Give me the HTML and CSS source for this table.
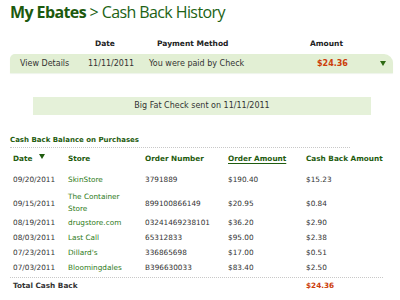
FILE: index.html
```html
<!DOCTYPE html>
<html>
<head>
<meta charset="utf-8">
<link rel="stylesheet" href="styles.css">
</head>
<body>
<div class="page">
  <h1 class="title"><b>My Ebates</b> &gt; Cash Back History</h1>

  <div class="pay-head">
    <span class="c-view"></span>
    <span class="c-date">Date</span>
    <span class="c-method">Payment Method</span>
    <span class="c-amt">Amount</span>
  </div>
  <div class="pay-row">
    <span class="c-view">View Details</span>
    <span class="c-date">11/11/2011</span>
    <span class="c-method">You were paid by Check</span>
    <span class="c-amt red">$24.36</span>
    <span class="c-arrow"><svg width="6" height="5" viewBox="0 0 6 5"><path d="M0 0H6L3 5Z" fill="#2f6b14"/></svg></span>
  </div>

  <div class="notice">Big Fat Check sent on 11/11/2011</div>

  <div class="section-title">Cash Back Balance on Purchases</div>

  <div class="grid">
    <div class="hd row-h">Date <svg class="sort" width="6" height="5" viewBox="0 0 6 5"><path d="M0 0H6L3 5Z" fill="#1f5c0f"/></svg></div>
    <div class="hd row-h">Store</div>
    <div class="hd row-h">Order Number</div>
    <div class="hd row-h"><u>Order Amount</u></div>
    <div class="hd row-h">Cash Back Amount</div>

    <div class="r1">09/20/2011</div><div class="r1 store">SkinStore</div><div class="r1">3791889</div><div class="r1">$190.40</div><div class="r1">$15.23</div>
    <div class="r2">09/15/2011</div><div class="r2 store two">The Container<br>Store</div><div class="r2">899100866149</div><div class="r2">$20.95</div><div class="r2">$0.84</div>
    <div class="rn">08/19/2011</div><div class="rn store">drugstore.com</div><div class="rn">03241469238101</div><div class="rn">$36.20</div><div class="rn">$2.90</div>
    <div class="rn">08/03/2011</div><div class="rn store">Last Call</div><div class="rn">65312833</div><div class="rn">$95.00</div><div class="rn">$2.38</div>
    <div class="rn">07/23/2011</div><div class="rn store">Dillard's</div><div class="rn">336865698</div><div class="rn">$17.00</div><div class="rn">$0.51</div>
    <div class="rn">07/03/2011</div><div class="rn store">Bloomingdales</div><div class="rn">B396630033</div><div class="rn">$83.40</div><div class="rn">$2.50</div>
  </div>

  <div class="total">
    <span class="total-label">Total Cash Back</span>
    <span class="total-amt red">$24.36</span>
  </div>
</div>
</body>
</html>
```

FILE: styles.css
```css
html, body {
  margin: 0;
  padding: 0;
  background: #ffffff;
}
body {
  font-family: "DejaVu Sans", Verdana, sans-serif;
  color: #333333;
  width: 400px;
  height: 300px;
  overflow: hidden;
}
.page {
  padding: 0 7px 0 10px;
}
.title {
  margin: 0;
  padding-top: 1px;
  height: 32px;
  font-family: "Open Sans", "DejaVu Sans", sans-serif;
  font-weight: normal;
  font-size: 16px;
  line-height: 22px;
  color: #216214;
  letter-spacing: -0.6px;
}
.title b {
  font-weight: bold;
  color: #1c5a0e;
}
.pay-head, .pay-row {
  display: flex;
  align-items: center;
}
.pay-head {
  height: 21px;
  font-size: 7.5px;
  font-weight: bold;
  color: #222;
}
.pay-head .c-date { padding-left: 7px; width: 62px; }
.pay-head .c-method { width: 153px; }
.pay-head .c-amt { width: 62px; }
.pay-row {
  height: 19px;
  background: #e2efd4;
  border-radius: 5px 9px 0 0;
  font-size: 8px;
  color: #333;
  box-shadow: 0 1px 1px #eef4ea;
}
.c-view { width: 68px; padding-left: 10px; flex: none; }
.c-date { width: 61px; flex: none; }
.c-method { width: 161px; flex: none; }
.c-amt { width: 62px; flex: none; }
.pay-row .c-amt { padding-left: 7px; width: 55px; }
.c-arrow { padding-left: 8px; display: flex; }
.red {
  color: #cc3d0a;
  font-weight: bold;
}
.notice {
  margin: 24px 22px 0 23px;
  height: 18px;
  line-height: 18px;
  background: #e5f1d9;
  text-align: center;
  font-size: 8px;
  color: #333;
}
.section-title {
  margin-top: 20px;
  width: 340px;
  font-size: 7px;
  font-weight: bold;
  color: #1f5c0f;
  line-height: 10px;
  padding-bottom: 2px;
  border-bottom: 1px dotted #c8c8c8;
}
.grid {
  display: grid;
  grid-template-columns: 55px 77px 83px 78px auto;
  padding-left: 3px;
  font-size: 7.3px;
  color: #333;
}
.grid > div {
  display: flex;
  align-items: center;
  white-space: nowrap;
}
.hd {
  font-weight: bold;
  color: #1f5c0f;
}
.hd u {
  text-decoration-thickness: 1px;
  text-underline-offset: 2px;
}
.sort {
  margin-left: 7px;
  margin-top: -3px;
}
.row-h { height: 20px; }
.r1 { height: 23px; }
.r2 { height: 24px; }
.rn { height: 15px; }
.store { color: #2d7a18; }
.two { line-height: 12px; }
.total {
  margin-top: 2px;
  width: 373px;
  border-top: 1px dotted #c8c8c8;
  display: flex;
  align-items: center;
  height: 15px;
  font-size: 7.3px;
}
.total-label {
  padding-left: 3px;
  width: 293px;
  font-weight: bold;
  color: #333;
}
```
